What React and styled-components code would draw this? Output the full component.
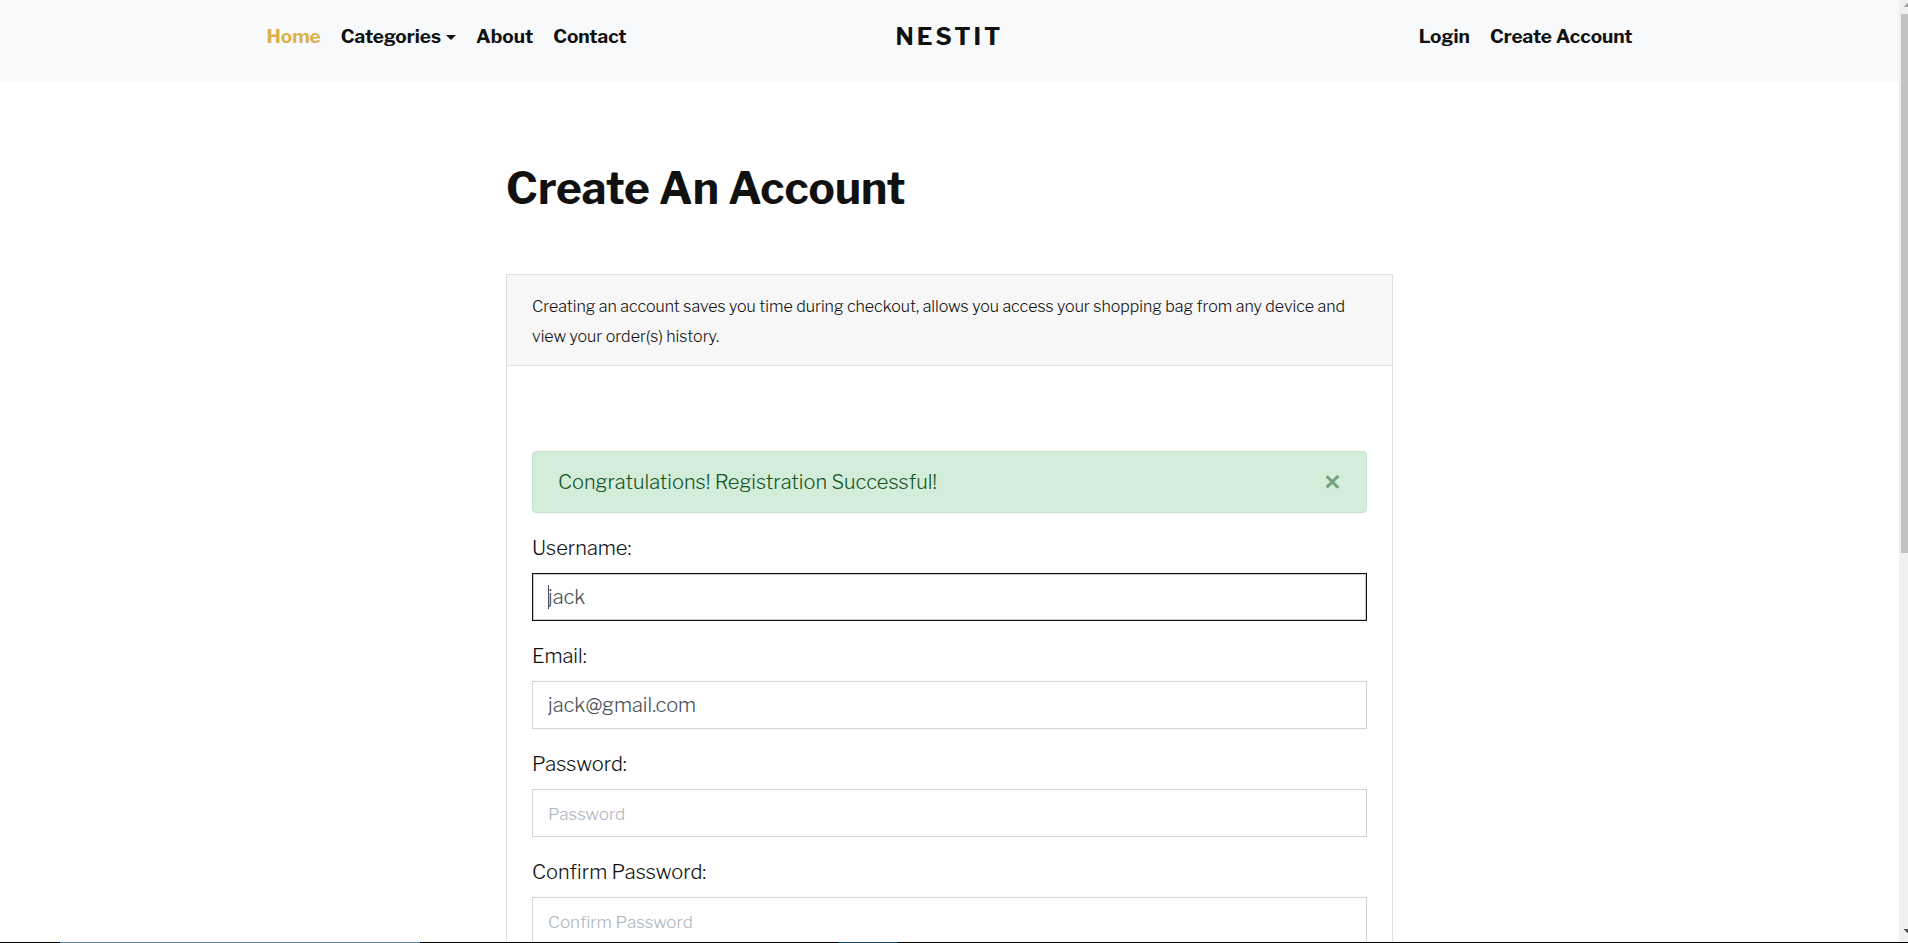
import React, { useState } from 'react';
import styled, { createGlobalStyle, css } from 'styled-components';

const GlobalStyle = createGlobalStyle`
  *, *::before, *::after { box-sizing: border-box; }
  body {
    margin: 0;
    background: #fff;
    color: #111;
    font-family: "Libre Franklin", Inter, "Liberation Sans", sans-serif;
    font-size: 20px;
    font-weight: 300;
    line-height: 30px;
  }
`;

const Screen = styled.div`
  display: grid;
  grid-template: minmax(0, 1fr) 1px / minmax(0, 1fr) 9px;
  height: 100vh;
  overflow: hidden;
`;

const Page = styled.div`
  min-width: 0;
  overflow: hidden;
`;

const Navbar = styled.nav`
  padding: 21px 24px 29px;
  background: #f8f9fb;
`;

const NavInner = styled.div`
  display: grid;
  grid-template-columns: 1fr auto 1fr;
  align-items: center;
  max-width: 1366px;
  min-height: 32px;
  margin: 0 auto;
`;

const NavList = styled.ul`
  display: flex;
  justify-content: ${({ $end }) => ($end ? 'flex-end' : 'flex-start')};
  gap: 20px;
  margin: 0;
  padding: 0;
  font-size: 19px;
  font-weight: 700;
  list-style: none;
`;

const NavLink = styled.a`
  color: ${({ $active }) => ($active ? '#dcb14a' : '#111')};
  text-decoration: none;
  white-space: nowrap;
`;

const DropdownToggle = styled.button`
  display: flex;
  align-items: center;
  gap: 5px;
  padding: 0;
  border: 0;
  background: none;
  color: #111;
  font: inherit;
  cursor: pointer;

  &::after {
    content: '';
    border: 5px solid transparent;
    border-top-color: currentColor;
    border-bottom: 0;
  }
`;

const Brand = styled.a`
  color: #111;
  font-size: 24px;
  font-weight: 700;
  letter-spacing: 3px;
  text-decoration: none;
`;

const Main = styled.main`
  max-width: 887px;
  margin: 0 auto;
  padding: 80px 0;
`;

const Title = styled.h1`
  margin: 0 0 60px;
  font-size: 44px;
  font-weight: 700;
  line-height: 52px;
`;

const Card = styled.section`
  border: 1px solid #dfdfdf;
  background: #fff;
`;

const CardHeader = styled.p`
  margin: 0;
  padding: 17px 25px 13px;
  border-bottom: 1px solid #dfdfdf;
  background: #f7f7f7;
  font-size: 16px;
`;

const CardBody = styled.div`
  padding: 85px 25px 25px;
`;

const Alert = styled.div`
  display: flex;
  align-items: center;
  justify-content: space-between;
  margin-bottom: 20px;
  padding: 15px 25px;
  border: 1px solid #c3e6cb;
  border-radius: 4px;
  background: #d4edda;
  color: #155724;
`;

const CloseButton = styled.button`
  padding: 0;
  border: 0;
  background: none;
  color: inherit;
  font: inherit;
  font-size: 30px;
  font-weight: 600;
  line-height: 30px;
  opacity: 0.5;
  cursor: pointer;
`;

const FormGroup = styled.div`
  display: flex;
  flex-direction: column;
  gap: 10px;
  margin-bottom: 20px;
`;

const Control = styled.div`
  position: relative;
`;

const Input = styled.input`
  display: block;
  width: 100%;
  height: 48px;
  padding: 0 15px;
  border: 1px solid #ced4da;
  border-radius: 0;
  outline: 0;
  background: #fff;
  color: #495057;
  font: inherit;

  ${({ $focused }) => $focused && css`
    border-color: #111;
    box-shadow: inset 0 0 0 1px #ccc;
  `}

  &::placeholder {
    color: #adb5bd;
    font-size: 17px;
    opacity: 1;
  }
`;

const TextCursor = styled.span`
  position: absolute;
  top: 12px;
  left: 16px;
  width: 1px;
  height: 24px;
  background: #495057;
`;

const Scrollbar = styled.div`
  display: flex;
  flex-direction: column;
  background: #f0f0f0;
`;

const ScrollTrack = styled.div`
  flex: 1;
  padding-left: 2px;
`;

const ScrollThumb = styled.div`
  height: 59%;
  background: #c1c1c1;
`;

const ScrollArrow = styled.svg`
  display: block;
  width: 9px;
  height: 14px;
  fill: ${({ $enabled }) => ($enabled ? '#505050' : '#a3a3a3')};
`;

const Taskbar = styled.div`
  display: flex;
  grid-column: 1 / -1;
  background: #000;
`;

const TaskbarItem = styled.span`
  width: ${({ $width }) => $width}px;
  background: ${({ $color }) => $color};
`;

const initialFields = [
  { id: 'username', label: 'Username:', type: 'text', value: 'jack', focused: true },
  { id: 'email', label: 'Email:', type: 'email', value: 'jack@gmail.com' },
  { id: 'password', label: 'Password:', type: 'password', value: '', placeholder: 'Password' },
  { id: 'confirm', label: 'Confirm Password:', type: 'password', value: '', placeholder: 'Confirm Password' },
];

function Field({ id, label, type, value, placeholder, focused }) {
  return (
    <FormGroup>
      <label htmlFor={id}>{label}</label>
      <Control>
        <Input id={id} type={type} defaultValue={value} placeholder={placeholder} $focused={focused} />
        {focused && <TextCursor aria-hidden="true" />}
      </Control>
    </FormGroup>
  );
}

export default function App() {
  const [alertOpen, setAlertOpen] = useState(true);
  return (
    <>
      <GlobalStyle />
      <Screen>
        <Page>
          <Navbar>
            <NavInner>
              <NavList>
                <li><NavLink href="#home" $active>Home</NavLink></li>
                <li><DropdownToggle type="button">Categories</DropdownToggle></li>
                <li><NavLink href="#about">About</NavLink></li>
                <li><NavLink href="#contact">Contact</NavLink></li>
              </NavList>
              <Brand href="#home">NESTIT</Brand>
              <NavList $end>
                <li><NavLink href="#login">Login</NavLink></li>
                <li><NavLink href="#register">Create Account</NavLink></li>
              </NavList>
            </NavInner>
          </Navbar>
          <Main>
            <Title>Create An Account</Title>
            <Card>
              <CardHeader>
                Creating an account saves you time during checkout, allows you access your
                shopping bag from any device and view your order(s) history.
              </CardHeader>
              <CardBody>
                {alertOpen && (
                  <Alert role="alert">
                    <span>Congratulations! Registration Successful!</span>
                    <CloseButton type="button" onClick={() => setAlertOpen(false)}>×</CloseButton>
                  </Alert>
                )}
                <form>
                  {initialFields.map((field) => <Field key={field.id} {...field} />)}
                </form>
              </CardBody>
            </Card>
          </Main>
        </Page>
        <Scrollbar aria-hidden="true">
          <ScrollArrow viewBox="0 0 9 14"><path d="M5 7h4V3H8v1H7v1H6v1H5z" /></ScrollArrow>
          <ScrollTrack><ScrollThumb /></ScrollTrack>
          <ScrollArrow viewBox="0 0 9 14" $enabled><path d="M5 1h4v4H8V4H7V3H6V2H5z" /></ScrollArrow>
        </Scrollbar>
        <Taskbar aria-hidden="true">
          <TaskbarItem $width={60} $color="#000" />
          <TaskbarItem $width={360} $color="#5a7f92" />
          <TaskbarItem $width={418} $color="#000" />
          <TaskbarItem $width={60} $color="#104a6a" />
        </Taskbar>
      </Screen>
    </>
  );
}
